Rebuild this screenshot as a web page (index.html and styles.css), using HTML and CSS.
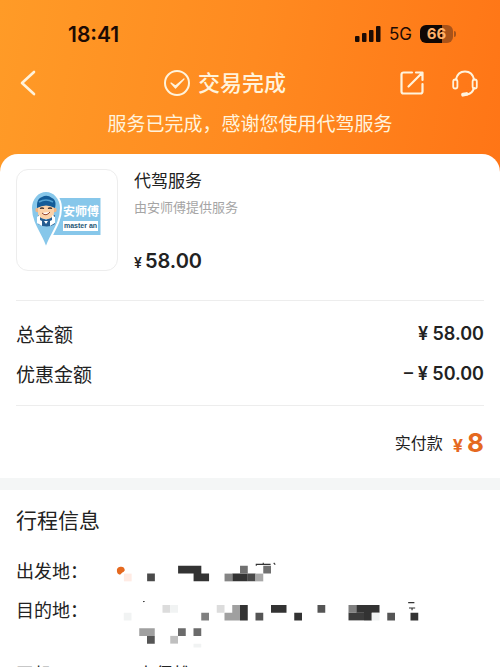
FILE: index.html
```html
<!DOCTYPE html>
<html lang="zh-CN">
<head>
<meta charset="utf-8">
<meta name="viewport" content="width=device-width, initial-scale=1">
<title>交易完成</title>
<link rel="stylesheet" href="styles.css">
</head>
<body>
<header class="hero">
  <div class="status">
    <span class="clock">18:41</span>
    <div class="indicators">
      <svg class="signal" width="26" height="16" viewBox="0 0 26 16"><rect x="0" y="10" width="4.500" height="6" rx="1"/><rect x="7" y="7" width="4.500" height="9" rx="1"/><rect x="14" y="4" width="4.500" height="12" rx="1"/><rect x="21" y="0" width="4.500" height="16" rx="1"/></svg>
      <span class="network">5G</span>
      <span class="battery">66</span>
    </div>
  </div>
  <div class="titlebar">
    <button class="icon-button" aria-label="返回"><svg width="16" height="26" viewBox="0 0 16 26"><path d="M14 2 2 13l12 11" stroke-width="2.600"/></svg></button>
    <h1 class="title"><svg width="26" height="26" viewBox="0 0 26 26"><circle cx="13" cy="13" r="12" stroke-width="2"/><path d="m7 13 4.500 3L20 9l-8.500 9z" stroke-width="1.200" fill="#fff3dc"/></svg>交易完成</h1>
    <div class="actions">
      <button class="icon-button" aria-label="分享"><svg width="24" height="24" viewBox="0 0 24 24"><path d="M12 1.500H3.500A2 2 0 0 0 1.500 3.500v17a2 2 0 0 0 2 2h17a2 2 0 0 0 2-2V13M16 1.500h6.500V9M22 2 8.500 15.500" stroke-width="2.200"/></svg></button>
      <button class="icon-button" aria-label="客服"><svg width="26" height="27" viewBox="0 0 26 27"><path d="M4 9.500C5 4.500 8.500 1.500 13 1.500s8 3 9 8M22 18c-1 3.500-3.500 6-7 6.500" stroke-width="2.200"/><rect x="1.200" y="9.500" width="4.200" height="9" rx="2.100" stroke-width="1.800"/><rect x="20.600" y="9.500" width="4.200" height="9" rx="2.100" stroke-width="1.800"/><path d="m11 24.700 3.500-.7" stroke-width="3.800"/></svg></button>
    </div>
  </div>
  <p class="subtitle">服务已完成，感谢您使用代驾服务</p>
</header>
<main>
  <section class="order">
    <div class="product">
      <div class="logo">
        <svg width="100" height="100" viewBox="0 0 100 100" role="img" aria-label="安师傅 master an">
          <path d="M42 28h41.500v37H35z" fill="#87c7ea"/>
          <path d="M29 79C26 66 14 55 14 38a15 17 0 0 1 30 0c0 17-12 28-15 41Z" fill="#87c7ea" stroke="#fff" stroke-width="2"/>
          <path d="M21 54v-9l8 5 9-5v9q-8 5-17 0Z" fill="#235c91"/>
          <circle cx="20.500" cy="40" r="2.200" fill="#eeb587"/><circle cx="37.500" cy="40" r="2.200" fill="#eeb587"/>
          <path d="M21 35h16v8c0 8-16 8-16 0Z" fill="#fbd2a8"/>
          <path d="M20 38c0-5 0-9 5-11q5-3 10 1c4 2 4 6 3 10q-9-5-18 0Z" fill="#125b98"/>
          <path d="M22 32q7-4 14 0" fill="none" stroke="#51a0d1" stroke-width="1.500"/>
          <path d="M23 38.500q2-1 4 0m4 0q2-1 4 0" fill="none" stroke="#372b29" stroke-width="1.300"/>
          <path d="M25 43q4 4 8-1" fill="#fff" stroke="#93442d" stroke-width="1"/>
          <path d="M20 53v-6l3-2v5l2 1v5zm18 0v-6l-3-2v5l-2 1v5z" fill="#fff"/>
          <path d="m27 51 2 3 2-3" fill="#fff"/>
          <rect x="46" y="51" width="35" height="10" fill="#fff"/>
          <text x="46" y="46" class="logo-name">安师傅</text>
          <text x="47" y="58" class="logo-latin">master an</text>
        </svg>
      </div>
      <div class="product-info">
        <h2 class="product-name">代驾服务</h2>
        <p class="provider">由安师傅提供服务</p>
        <p class="price"><span class="yen">¥</span>58.00</p>
      </div>
    </div>
    <dl class="amounts">
      <div class="amount"><dt>总金额</dt><dd>¥ 58.00</dd></div>
      <div class="amount"><dt>优惠金额</dt><dd>– ¥ 50.00</dd></div>
    </dl>
    <p class="total">实付款<span class="paid"><span class="paid-yen">¥</span>8</span></p>
  </section>
  <section class="trip">
    <h2 class="trip-title">行程信息</h2>
    <dl class="details">
      <div class="detail"><dt>出发地：</dt><dd>
        <svg class="mosaic" width="310" height="24" viewBox="0 0 40 3.100">
          <path d="M.1 1.200A.5.500 0 0 1 1.120 1.050Q1 1.300.8 1.350L.5 1.650Q.15 1.600.1 1.200Z" fill="#e5691f"/>
          <path d="M1 1.500h1v1H1z" fill="#ffebe4"/>
          <path d="M8 .5h3v1h1v1h-2v-1H8zM15 1.500h2v1h-2z" fill="#333"/>
          <path d="M4 1.500h1v1H4zM17 1.500h1v1h-1z" fill="#4a4a4a"/>
          <path d="M16 .5h1v1h-1zM19 .5h1v1h-1z" fill="#707070"/>
          <path d="M14 1.500h1v1h-1z" fill="#858585"/><path d="M18 1.500h1v1h-1z" fill="#a8a8a8"/>
          <path d="M18.100.5V.300h1.850M19 .4V.1M20.350.1l.2.250" fill="none" stroke="#333" stroke-width=".15"/>
        </svg></dd></div>
      <div class="detail destination"><dt>目的地：</dt><dd>
        <svg class="mosaic" width="310" height="50" viewBox="0 0 40 6.450">
          <path d="M20 .5h2v1h-2zM16 .5h1v2h-1zM23 1.500h1v1h-1zM31 .5h3v1h-1v1h-1v-1h-1zM38 1.500h1v1h-1z" fill="#333"/>
          <path d="M30 1.500h2v1h-2z" fill="#3c3c3c"/>
          <path d="M18 1.500h1v1h-1zM26 .5h1v1h-1zM35 1.500h1v1h-1zM4 4.500h1v1H4z" fill="#555"/>
          <path d="M8 3.500h1v1H8zM10 3.500h1v1h-1z" fill="#6b6b6b"/>
          <path d="M11 1.500h1v1h-1zM30 .5h1v1h-1z" fill="#808080"/>
          <path d="M3 3.500h2v1H3zM14 1.500h2v1h-2zM15 .5h1v1h-1z" fill="#a0a0a0"/>
          <path d="M7 4.500h1v1H7z" fill="#bfbfbf"/>
          <path d="M6 .5h1v1H6zM13 .5h1v1h-1z" fill="#dcdcdc"/>
          <path d="M7 .5h1v1H7zM10 5.500h1v.5h-1zM1 1.500h1v1H1zM33 1.500h1v1h-1z" fill="#f1f3f3"/>
          <path d="M3.500.1 3.700 0M37.700.2h.8M37.800.9h.8M38.200.9v.3" fill="none" stroke="#333" stroke-width=".15"/>
        </svg></dd></div>
      <div class="detail"><dt>司机：</dt><dd class="driver">李保雄</dd></div>
    </dl>
  </section>
</main>
</body>
</html>
```
FILE: styles.css
```css
* { box-sizing: border-box; }
html { height: 100%; overflow: hidden; }
body {
  height: 100%;
  margin: 0;
  overflow: hidden;
  background: #fff;
  color: #222;
  font-family: Inter, "Noto Sans CJK SC", sans-serif;
}
h1, h2, p, dl, dd { margin: 0; font-weight: 400; }
.hero {
  height: 172px;
  padding: 20px 20px 0;
  background: linear-gradient(100deg, #ff9b27 0%, #ff8a20 50%, #ff7516 100%);
  color: #fff3dc;
}
.status {
  display: flex;
  justify-content: space-between;
  align-items: center;
  height: 28px;
  padding: 0 27px 0 48px;
  color: #1c0b04;
}
.clock { font-size: 21px; font-weight: 600; }
.indicators { display: flex; align-items: center; gap: 8px; }
.signal { fill: #1c0b04; }
.network { font-size: 17px; }
.battery {
  position: relative;
  width: 33px;
  height: 18px;
  border-radius: 6px;
  background: linear-gradient(90deg, #100704 66%, #a95319 66%);
  color: #ffb169;
  font-size: 15px;
  font-weight: 700;
  line-height: 18px;
  text-align: center;
}
.battery::after {
  content: "";
  position: absolute;
  top: 6px;
  right: -3px;
  width: 2px;
  height: 6px;
  border-radius: 0 2px 2px 0;
  background: #a95319;
}
.titlebar {
  display: grid;
  grid-template-columns: 1fr auto 1fr;
  align-items: center;
  height: 40px;
  margin-top: 15px;
}
.titlebar svg { display: block; fill: none; stroke: #fff3dc; stroke-linecap: round; stroke-linejoin: round; }
.icon-button { justify-self: start; padding: 0; border: 0; background: none; }
.title { display: flex; align-items: center; gap: 8px; padding-right: 50px; font-size: 22px; font-weight: 500; line-height: 32px; }
.actions { display: flex; justify-content: flex-end; align-items: center; gap: 28px; margin-right: 2px; }
.subtitle { margin-top: 8px; font-size: 19px; line-height: 28px; text-align: center; }
.order {
  position: relative;
  margin-top: -18px;
  padding: 15px 16px 0;
  border-radius: 18px 18px 0 0;
  background: #fff;
}
.product { display: flex; gap: 16px; height: 132px; border-bottom: 1px solid #ededed; }
.logo { flex: none; width: 102px; height: 102px; border: 1px solid #ededed; border-radius: 12px; }
.logo svg { display: block; }
.logo-name { fill: #fff; font-size: 12px; font-weight: 700; }
.logo-latin { fill: #245675; font-family: "Liberation Sans", sans-serif; font-size: 7px; font-weight: 700; }
.product-name { font-size: 17px; line-height: 24px; }
.provider { margin-top: 4px; color: #a5a5a5; font-size: 13px; line-height: 20px; }
.price { margin-top: 32px; font-size: 20px; font-weight: 600; line-height: 24px; }
.yen { margin-right: 3px; font-size: 14px; }
.amounts { padding: 12px 0; border-bottom: 1px solid #ededed; }
.amount { display: flex; justify-content: space-between; align-items: center; height: 40px; font-size: 18px; }
.amount dt { font-size: 19px; }
.amount dd { font-weight: 600; }
.total { display: flex; justify-content: flex-end; align-items: center; height: 72px; font-size: 16px; }
.paid { margin-left: 10px; color: #e5691f; font-size: 26px; font-weight: 700; }
.paid-yen { margin-right: 4px; font-size: 18px; }
.trip { padding: 14px 16px 0; border-top: 12px solid #f4f6f6; }
.trip-title { font-size: 21px; line-height: 34px; }
.details { margin-top: 17px; font-size: 18px; line-height: 24px; }
.detail { display: flex; min-height: 39px; }
.detail dt { flex: none; width: 100px; padding: 5px 0; }
.detail dd { flex: 1; padding-top: 7px; }
.destination { min-height: 64px; }
.detail .driver { padding: 5px 0 0 21px; }
.mosaic { display: block; }
```
